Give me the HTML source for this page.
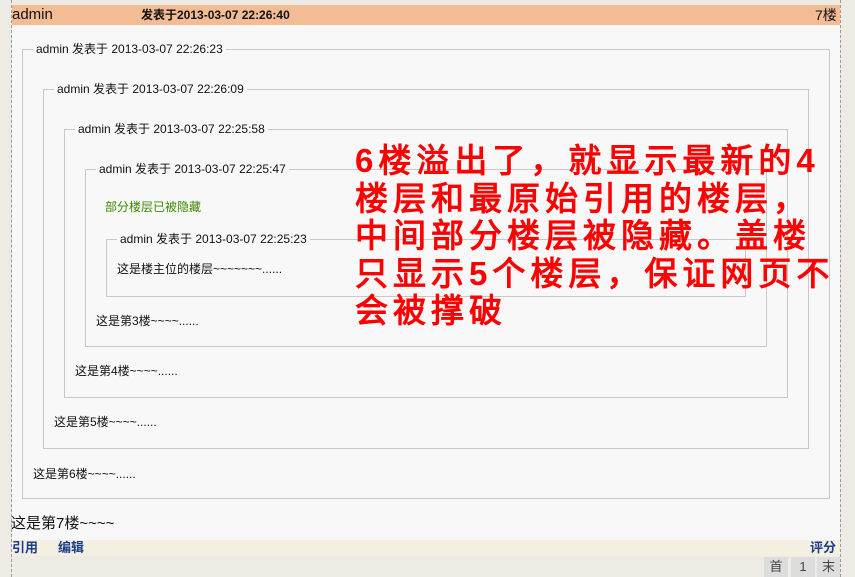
<!DOCTYPE html>
<html><head><meta charset="utf-8"><style>
*{margin:0;padding:0;box-sizing:border-box}
body{width:855px;height:577px;background:#eeebe5;position:relative;overflow:hidden;font-family:"Liberation Sans","Noto Sans CJK SC",sans-serif;}
.a{position:absolute}
.vl{position:absolute;top:0;bottom:0;width:0;border-left:1px dashed #9a9a9a}
.fs{position:absolute;border:1px solid #c8c8c8}
.lg{position:absolute;top:-9px;left:10px;background:#f8f8f8;padding:0 3px;font-size:12px;color:#111;line-height:16px;white-space:nowrap;font-family:"Liberation Sans","WenQuanYi Zen Hei",sans-serif}
.t{position:absolute;font-size:12px;color:#111;white-space:nowrap;line-height:14px;font-family:"Liberation Sans","WenQuanYi Zen Hei",sans-serif}
</style></head><body>
<div class="vl" style="left:11px"></div>
<div class="vl" style="left:840px"></div>
<div class="a" style="left:12px;top:25px;width:828px;height:515px;background:#f8f8f8"></div>
<div class="a" style="left:12px;top:5px;width:828px;height:20px;background:#f3bc94"></div>
<div class="a" style="left:12px;top:5px;font-size:15px;line-height:20px;color:#111">admin</div>
<div class="a" style="left:141px;top:5px;font-size:12px;font-weight:bold;line-height:20px;color:#111">发表于2013-03-07 22:26:40</div>
<div class="a" style="left:815px;top:5px;font-size:14px;line-height:20px;color:#111">7楼</div>

<div class="fs" style="left:22px;top:49px;width:808px;height:450px"><div class="lg">admin 发表于 2013-03-07 22:26:23</div></div>
<div class="fs" style="left:43px;top:89px;width:766px;height:360px"><div class="lg">admin 发表于 2013-03-07 22:26:09</div></div>
<div class="fs" style="left:64px;top:129px;width:724px;height:269px"><div class="lg">admin 发表于 2013-03-07 22:25:58</div></div>
<div class="fs" style="left:85px;top:169px;width:682px;height:178px"><div class="lg">admin 发表于 2013-03-07 22:25:47</div></div>
<div class="fs" style="left:106px;top:239px;width:640px;height:58px"><div class="lg">admin 发表于 2013-03-07 22:25:23</div></div>
<div class="t" style="left:105px;top:200px;color:#3a8a00">部分楼层已被隐藏</div>
<div class="t" style="left:117px;top:262px">这是楼主位的楼层~~~~~~~......</div>
<div class="t" style="left:96px;top:314px">这是第3楼~~~~......</div>
<div class="t" style="left:75px;top:364px">这是第4楼~~~~......</div>
<div class="t" style="left:54px;top:415px">这是第5楼~~~~......</div>
<div class="t" style="left:33px;top:467px">这是第6楼~~~~......</div>

<div class="a" style="left:355px;top:142px;width:500px;font-size:33px;line-height:37.5px;letter-spacing:5px;color:#f00;font-weight:bold;white-space:nowrap;font-family:'Liberation Sans','WenQuanYi Zen Hei',sans-serif">6楼溢出了，就显示最新的4<br>楼层和最原始引用的楼层，<br>中间部分楼层被隐藏。盖楼<br>只显示5个楼层，保证网页不<br>会被撑破</div>

<div class="a" style="left:11px;top:515px;font-size:15px;line-height:18px;color:#111;font-family:'Liberation Sans','WenQuanYi Zen Hei',sans-serif">这是第7楼~~~~</div>
<div class="a" style="left:12px;top:540px;width:828px;height:16px;background:#f3efe1"></div>
<div class="a" style="left:12px;top:540px;font-size:13px;font-weight:bold;line-height:16px;color:#1a3c8c">引用</div>
<div class="a" style="left:58px;top:540px;font-size:13px;font-weight:bold;line-height:16px;color:#1a3c8c">编辑</div>
<div class="a" style="left:810px;top:540px;font-size:13px;font-weight:bold;line-height:16px;color:#1a3c8c">评分</div>
<div class="a" style="left:764px;top:557px;width:24px;height:20px;background:#ddd;font-size:13px;line-height:20px;text-align:center;color:#444">首</div>
<div class="a" style="left:791px;top:557px;width:24px;height:20px;background:#ddd;font-size:13px;line-height:20px;text-align:center;color:#444">1</div>
<div class="a" style="left:817px;top:557px;width:23px;height:20px;background:#ddd;font-size:13px;line-height:20px;text-align:center;color:#444">末</div>
</body></html>
